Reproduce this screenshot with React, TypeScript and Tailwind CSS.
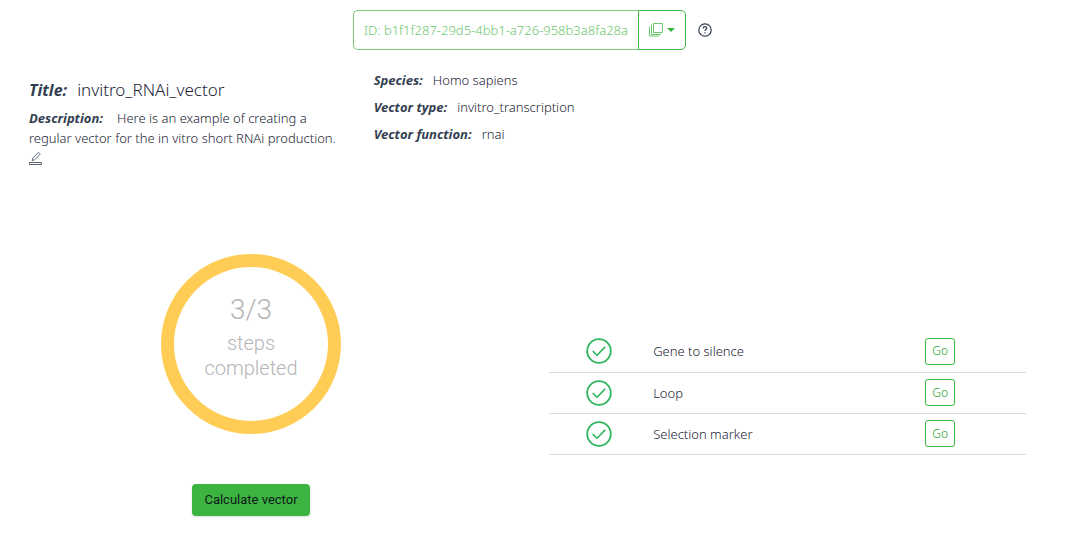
import React from "react";

const steps = ["Gene to silence", "Loop", "Selection marker"];

const details = [
  { label: "Species:", value: "Homo sapiens" },
  { label: "Vector type:", value: "invitro_transcription" },
  { label: "Vector function:", value: "rnai" },
];

function StackIcon() {
  return (
    <svg aria-hidden="true" width="14" height="14" viewBox="0 0 14 14" fill="none" stroke="currentColor" className="text-[#6cc66e]">
      <path d="M4.5 .5h9v9h-9zM2.5 1.5v10H12M.5 3.5v9.5H10" />
    </svg>
  );
}

function HelpIcon() {
  return (
    <svg aria-hidden="true" width="14" height="14" viewBox="0 0 14 14" fill="none" stroke="currentColor" strokeWidth="1.2">
      <circle cx="7" cy="7" r="6.2" />
      <path d="M5.2 5.5c0-1.1.8-1.8 1.8-1.8s1.8.7 1.8 1.6c0 1.3-1.8 1.3-1.8 2.8" />
      <path d="M7 9.2v1.2" />
    </svg>
  );
}

function EditIcon() {
  return (
    <svg aria-hidden="true" width="13" height="13" viewBox="0 0 13 13" fill="none" stroke="currentColor">
      <path d="M.5 10.5h12v2H.5z" />
      <path d="M3.2 8.5l.6-2.4L8.9.9c.4-.4.9-.4 1.3 0l.5.5c.4.4.4.9 0 1.3L5.5 7.9z" />
    </svg>
  );
}

function CheckIcon() {
  return (
    <svg role="img" aria-label="Completed" width="26" height="26" viewBox="0 0 26 26" fill="none" stroke="currentColor" className="mx-auto block text-[#2fb65d]">
      <circle cx="13" cy="13" r="11.8" strokeWidth="1.8" />
      <path d="M6.8 13.1l4.2 4.1 8.2-8.3" strokeWidth="1.6" />
    </svg>
  );
}

export default function App() {
  return (
    <main className="bg-white pt-2.5 pb-6 font-['Noto_Sans',sans-serif] text-[13px] leading-5 font-light text-[#1c2536]">
      <header className="flex items-center justify-center gap-3 pr-1.5">
        <div className="flex h-10">
          <button type="button" className="rounded-l-[5px] border border-r-0 border-[#7bcb7c] px-2.5 font-[350] text-[#6cc66e]">
            ID: b1f1f287-29d5-4bb1-a726-958b3a8fa28a
          </button>
          <button type="button" aria-label="Copy vector" className="flex items-center gap-1 rounded-r-[5px] border border-[#3eb440] px-2.5 text-[#3eb440]">
            <StackIcon />
            <svg aria-hidden="true" width="8" height="4" viewBox="0 0 8 4" fill="currentColor">
              <path d="M0 0h8L4 4z" />
            </svg>
          </button>
        </div>
        <button type="button" aria-label="Help" className="text-[#343f52]">
          <HelpIcon />
        </button>
      </header>

      <section className="grid grid-cols-3 gap-7 pt-5 pr-9 pl-[29px]">
        <div className="pt-2">
          <h1 className="text-[17px] leading-6">
            <b className="mr-2.5 text-base font-bold text-[#343f52] italic">Title:</b>invitro_RNAi_vector
          </h1>
          <p className="pt-1.5">
            <b className="mr-3.5 font-bold text-[#343f52] italic">Description:</b>Here is an example of creating a regular vector for the in vitro short RNAi production.
          </p>
          <button type="button" aria-label="Edit description" className="mt-1 block text-[#5d6575]">
            <EditIcon />
          </button>
        </div>
        <dl className="flex flex-col gap-[7px]">
          {details.map((item) => (
            <div key={item.label} className="flex gap-2.5">
              <dt className="font-bold text-[#343f52] italic">{item.label}</dt>
              <dd>{item.value}</dd>
            </div>
          ))}
        </dl>
      </section>

      <section className="grid grid-cols-[444fr_477fr] gap-[76px] pt-[89px] pr-[45px] pl-[29px]">
        <div className="flex flex-col items-center">
          <div className="flex size-[180px] flex-col items-center rounded-full border-[13px] border-[#ffcd56] pt-[25px] text-center font-['Roboto',sans-serif] font-light text-[#b5b5b5]">
            <p className="text-[28px] leading-9">3/3</p>
            <p className="w-28 pt-[3px] text-xl leading-[25px]">steps completed</p>
          </div>
          <button type="button" className="mt-[50px] h-8 rounded bg-[#3eb440] px-3 font-['Roboto',sans-serif] text-[13px] font-normal text-[#0b1b1b] shadow-sm">
            Calculate vector
          </button>
        </div>
        <div className="pt-[77px]">
          <table className="w-full table-fixed border-collapse">
            <colgroup>
              <col className="w-[21%]" />
              <col />
              <col className="w-[36%]" />
            </colgroup>
            <tbody>
              {steps.map((step) => (
                <tr key={step} className="h-[41px] border-b border-[#dadbdd]">
                  <td><CheckIcon /></td>
                  <td className="pl-1">{step}</td>
                  <td className="text-center">
                    <button type="button" aria-label={`Go to ${step}`} className="h-[27px] rounded-[3px] border border-[#3eb440] px-1.5 text-xs text-[#2aa32c]">
                      Go
                    </button>
                  </td>
                </tr>
              ))}
            </tbody>
          </table>
        </div>
      </section>
    </main>
  );
}
